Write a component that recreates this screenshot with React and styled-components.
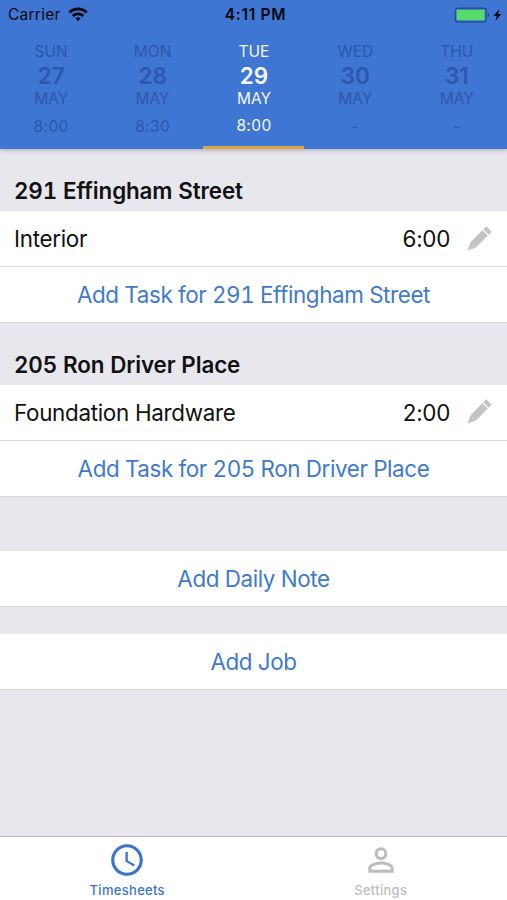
import React from 'react';
import styled, { createGlobalStyle } from 'styled-components';
import { MdAccessTime, MdPersonOutline } from 'react-icons/md';

const GlobalStyle = createGlobalStyle`
  * {
    box-sizing: border-box;
  }

  body {
    margin: 0;
    font-family: Inter, 'Liberation Sans', sans-serif;
    -webkit-font-smoothing: antialiased;
  }
`;

const Screen = styled.div`
  display: flex;
  flex-direction: column;
  width: 507px;
  height: 900px;
  background: #e8e7ed;
  color: #111;
  overflow: hidden;
`;

const Header = styled.header`
  height: 149px;
  flex-shrink: 0;
  background: #3f75d3;
  box-shadow: 0 1px 5px rgba(0, 0, 0, 0.28);
`;

const StatusBar = styled.div`
  display: grid;
  grid-template-columns: 1fr auto 1fr;
  align-items: center;
  height: 29px;
  padding: 0 4px 0 8px;
  color: #05080f;
`;

const Carrier = styled.div`
  display: flex;
  align-items: center;
  gap: 7px;
  font-size: 15.5px;
  letter-spacing: 0.25px;
`;

const Clock = styled.div`
  font-size: 15.5px;
  font-weight: 600;
  letter-spacing: 0.7px;
`;

const Power = styled.div`
  display: flex;
  justify-content: flex-end;
`;

const Days = styled.div`
  display: grid;
  grid-template-columns: repeat(5, 1fr);
  height: 120px;
`;

const Day = styled.div`
  display: flex;
  flex-direction: column;
  align-items: center;
  padding: 14px 0 0 1px;
  font-size: 15.5px;
  line-height: 18px;
  color: ${(props) => (props.$active ? '#f4f8ff' : '#2d56b0')};
  border-bottom: 3px solid ${(props) => (props.$active ? '#dea545' : 'transparent')};
`;

const DayNumber = styled.div`
  font-size: 22.5px;
  line-height: 29px;
  font-weight: 600;
`;

const DayHours = styled.div`
  margin-top: ${(props) => (props.$active ? 9 : 10)}px;
  letter-spacing: 0.4px;
`;

const Content = styled.main`
  flex: 1;
`;

const JobTitle = styled.h2`
  display: flex;
  align-items: flex-end;
  height: ${(props) => props.$height}px;
  margin: 0;
  padding: 0 14px 6px;
  font-size: 22.4px;
  line-height: 28px;
  font-weight: 600;
  letter-spacing: -0.12px;
  font-variant-numeric: tabular-nums;
`;

const Row = styled.div`
  display: flex;
  align-items: center;
  height: 56px;
  padding: 0 15px 0 14px;
  background: #fff;
  border-bottom: 1px solid #d9d9dd;
  font-size: 22.4px;
  letter-spacing: -0.3px;
`;

const TaskName = styled.span`
  flex: 1;
`;

const TaskHours = styled.span`
  margin-right: 17px;
`;

const AddButton = styled.button`
  display: block;
  width: 100%;
  height: 56px;
  margin: ${(props) => props.$gap || 0}px 0 0;
  padding: 0;
  border: 0;
  border-bottom: 1px solid #d9d9dd;
  background: #fff;
  color: #407acc;
  font-family: inherit;
  font-size: 22.4px;
  letter-spacing: -0.38px;
  font-variant-numeric: tabular-nums;
`;

const TabBar = styled.nav`
  display: grid;
  grid-template-columns: 1fr 1fr;
  height: 64px;
  flex-shrink: 0;
  background: #fff;
  border-top: 1px solid #b8b8bc;
`;

const Tab = styled.div`
  display: flex;
  flex-direction: column;
  align-items: center;
  padding: 4px 0 0 1px;
  font-size: 13px;
  line-height: 16px;
  font-weight: 500;
  letter-spacing: 0.3px;
  color: ${(props) => (props.$active ? '#3b74cd' : '#bdbdbd')};

  svg {
    margin-bottom: 3px;
  }
`;

const days = [
  { name: 'SUN', number: 27, hours: '8:00' },
  { name: 'MON', number: 28, hours: '8:30' },
  { name: 'TUE', number: 29, hours: '8:00', active: true },
  { name: 'WED', number: 30, hours: '-' },
  { name: 'THU', number: 31, hours: '-' },
];

const jobs = [
  { title: '291 Effingham Street', task: 'Interior', hours: '6:00', height: 62 },
  { title: '205 Ron Driver Place', task: 'Foundation Hardware', hours: '2:00', height: 61.5 },
];

function WifiIcon() {
  return (
    <svg width="20" height="15" viewBox="0 0 20 15" fill="none" stroke="currentColor" strokeWidth="2.7">
      <path d="M1.3 5.4c5-4.6 12.4-4.6 17.4 0" />
      <path d="M4.7 9c3-2.8 7.6-2.8 10.6 0" />
      <path d="M10 14.2l-2.7-2.9c1.5-1.3 3.9-1.3 5.4 0z" fill="currentColor" stroke="none" />
    </svg>
  );
}

function BatteryIcon() {
  return (
    <svg width="49" height="16" viewBox="0 0 49 16">
      <rect x="1.2" y="1.2" width="31" height="13.6" rx="2.5" fill="#3f75d3" stroke="#214a8c" strokeWidth="1.2" />
      <rect x="2.8" y="2.8" width="27.8" height="10.4" rx="1" fill="#55dc68" />
      <path d="M33.8 5.6c2 .7 2 4.1 0 4.8z" fill="#214a8c" />
      <path d="M45.5 2l-6 6.9h3.3L41.3 14l6-7h-3.3z" fill="currentColor" />
    </svg>
  );
}

function PencilIcon() {
  return (
    <svg width="25" height="26" viewBox="0 0 25 26" fill="#c4c4c4">
      <path d="M16.3 3.3l2.1-2.1c.6-.6 1.3-.6 1.9 0l3.5 3.5c.6.6.6 1.3 0 1.9l-2.1 2.1z" />
      <path d="M15.4 4.2l5.4 5.4L9 21.4 3.6 16z" />
      <path d="M3.3 16.6l1.9.5 1.4 1.4-1.2 1.6 1.9-.8 1.2 1.3.2.9L.5 24.4z" />
    </svg>
  );
}

function App() {
  return (
    <Screen>
      <GlobalStyle />
      <Header>
        <StatusBar>
          <Carrier>
            Carrier
            <WifiIcon />
          </Carrier>
          <Clock>4:11 PM</Clock>
          <Power>
            <BatteryIcon />
          </Power>
        </StatusBar>
        <Days>
          {days.map((day) => (
            <Day key={day.number} $active={day.active}>
              <div>{day.name}</div>
              <DayNumber>{day.number}</DayNumber>
              <div>MAY</div>
              <DayHours $active={day.active}>{day.hours}</DayHours>
            </Day>
          ))}
        </Days>
      </Header>
      <Content>
        {jobs.map((job) => (
          <section key={job.title}>
            <JobTitle $height={job.height}>{job.title}</JobTitle>
            <Row>
              <TaskName>{job.task}</TaskName>
              <TaskHours>{job.hours}</TaskHours>
              <PencilIcon />
            </Row>
            <AddButton>Add Task for {job.title}</AddButton>
          </section>
        ))}
        <AddButton $gap={54.5}>Add Daily Note</AddButton>
        <AddButton $gap={27}>Add Job</AddButton>
      </Content>
      <TabBar>
        <Tab $active>
          <MdAccessTime size={38} />
          Timesheets
        </Tab>
        <Tab>
          <MdPersonOutline size={38} />
          Settings
        </Tab>
      </TabBar>
    </Screen>
  );
}

export default App;
